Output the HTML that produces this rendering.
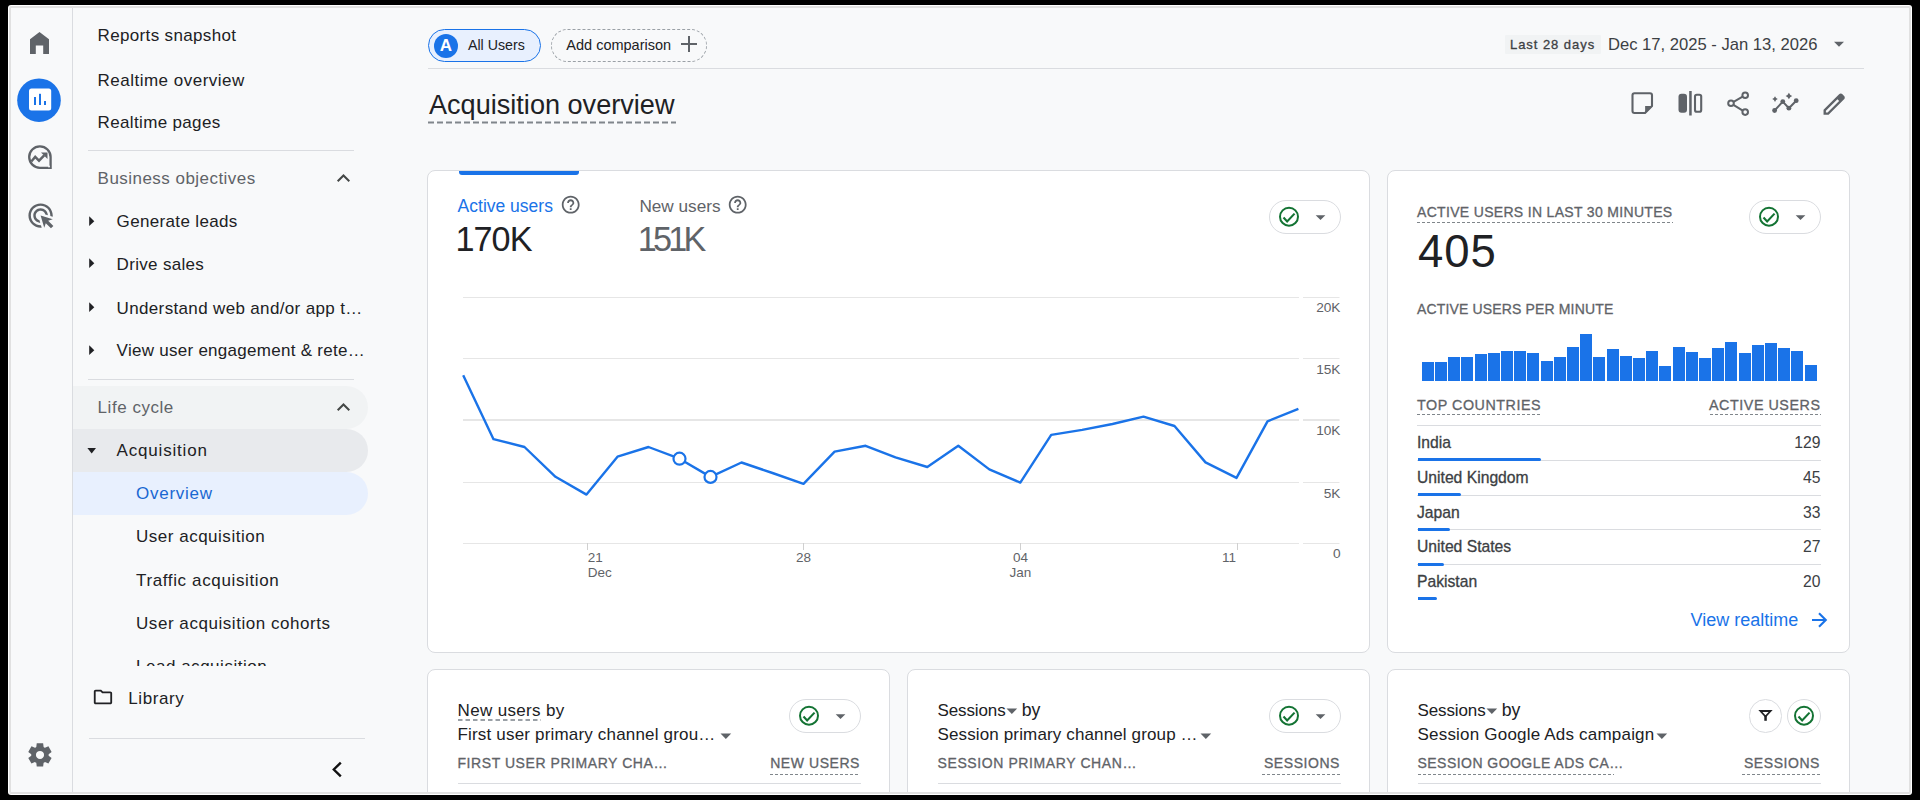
<!DOCTYPE html>
<html><head><meta charset="utf-8"><title>Acquisition overview</title>
<style>
html,body{margin:0;padding:0;width:1920px;height:800px;overflow:hidden;background:#000}
body{position:relative;font-family:"Liberation Sans",sans-serif}
.r{position:absolute;display:block}
.t{position:absolute;white-space:nowrap;line-height:1}
</style></head><body>
<div class="r" style="left:8px;top:5px;width:1904px;height:790px;background:#fff;border-radius:3px"></div>
<div class="r" style="left:9px;top:6px;width:1902px;height:788px;box-sizing:border-box;border:2px solid #e1e1e1;background:#f8f9fa;border-radius:2px"></div>
<div id="clip" style="position:absolute;left:0;top:0;width:1920px;height:800px;clip-path:inset(8px 11px 8px 11px)">
<div class="r" style="left:72px;top:8px;width:1px;height:784px;background:#dadce0;"></div>
<svg class="r" style="left:0px;top:0px;" width="80" height="60" viewBox="0 0 80 60"><path d="M30 54 V39.2 L39.5 32 L49 39.2 V54 H43.2 V45.6 H35.8 V54 Z" fill="#5f6368"/></svg>
<svg class="r" style="left:0px;top:70px;" width="80" height="60" viewBox="0 0 80 60"><circle cx="39" cy="30.2" r="21.8" fill="#1a73e8"/><rect x="29" y="18.6" width="22.2" height="22" rx="2.5" fill="#fff"/><rect x="34" y="27" width="2" height="8" fill="#1a73e8"/><rect x="39" y="23.8" width="2" height="11.2" fill="#1a73e8"/><rect x="44" y="31" width="2" height="4" fill="#1a73e8"/></svg>
<svg class="r" style="left:0px;top:130px;" width="80" height="50" viewBox="0 0 80 50"><path d="M50.6 27.1 V37.8 H39.9 A10.7 10.7 0 1 1 50.6 27.1 Z" fill="none" stroke="#5f6368" stroke-width="2.3"/><polyline points="31.3,31.6 35.2,26.9 39,30.7 44.2,25.3" fill="none" stroke="#5f6368" stroke-width="2.4"/><path d="M41 22.6 H47.5 V29 Z" fill="#5f6368"/><circle cx="49" cy="36.6" r="1" fill="#f8f9fa"/></svg>
<svg class="r" style="left:25.6px;top:201px;" width="29.2" height="29.2" viewBox="0 0 24 24"><path fill="#5f6368" d="M11.71,17.99C8.53,17.84,6,15.22,6,12c0-3.31,2.69-6,6-6c3.22,0,5.84,2.53,5.99,5.71l-2.1-0.63C15.48,9.31,13.89,8,12,8 c-2.21,0-4,1.79-4,4c0,1.89,1.31,3.47,3.08,3.89L11.71,17.99z M22,12c0,0.3-0.01,0.6-0.04,0.9l-1.97-0.59C20,12.21,20,12.1,20,12 c0-4.42-3.58-8-8-8s-8,3.58-8,8s3.58,8,8,8c0.1,0,0.21,0,0.31-0.01l0.59,1.97C12.6,21.99,12.3,22,12,22C6.48,22,2,17.52,2,12 C2,6.48,6.48,2,12,2S22,6.48,22,12z M18.23,16.26L22,15l-10-3l3,10l1.26-3.77l4.27,4.27l1.98-1.98L18.23,16.26z"/></svg>
<svg class="r" style="left:25.8px;top:741.1px;" width="27.9" height="27.9" viewBox="0 -960 960 960"><path fill="#5f6368" d="m370-80-16-128q-13-5-24.5-12T307-235l-119 50L78-375l103-78q-1-7-1-13.5v-27q0-6.5 1-13.5L78-585l110-190 119 50q11-8 23-15t24-12l16-128h220l16 128q13 5 24.5 12t22.5 15l119-50 110 190-103 78q1 7 1 13.5v27q0 6.5-2 13.5l103 78-110 190-118-50q-11 8-23 15t-24 12L590-80H370Zm112-260q58 0 99-41t41-99q0-58-41-99t-99-41q-59 0-99.5 41T342-480q0 58 40.5 99t99.5 41Z"/></svg>
<div class="t" style="top:27.00px;font-size:17.0px;color:#202124;letter-spacing:0.343px;left:97.6px;">Reports snapshot</div>
<div class="t" style="top:72.00px;font-size:17.0px;color:#202124;letter-spacing:0.486px;left:97.6px;">Realtime overview</div>
<div class="t" style="top:114.00px;font-size:17.0px;color:#202124;letter-spacing:0.347px;left:97.6px;">Realtime pages</div>
<div class="r" style="left:88px;top:150px;width:266px;height:1px;background:#dadce0;"></div>
<div class="t" style="top:170.00px;font-size:17.0px;color:#5f6368;letter-spacing:0.463px;left:97.6px;">Business objectives</div>
<svg class="r" style="left:330px;top:168px;" width="28" height="20" viewBox="0 0 28 20"><polyline points="7.7,13.3 13.5,7.5 19.3,13.3" fill="none" stroke="#444746" stroke-width="2"/></svg>
<svg class="r" style="left:84px;top:213.60000000000002px;" width="16" height="16" viewBox="0 0 16 16"><path d="M5.2 2.3 L10.3 7.2 L5.2 12.1 Z" fill="#202124"/></svg>
<div class="t" style="top:213.00px;font-size:17.0px;color:#202124;letter-spacing:0.342px;left:116.6px;">Generate leads</div>
<svg class="r" style="left:84px;top:256.40000000000003px;" width="16" height="16" viewBox="0 0 16 16"><path d="M5.2 2.3 L10.3 7.2 L5.2 12.1 Z" fill="#202124"/></svg>
<div class="t" style="top:256.00px;font-size:17.0px;color:#202124;letter-spacing:0.315px;left:116.6px;">Drive sales</div>
<svg class="r" style="left:84px;top:300.3px;" width="16" height="16" viewBox="0 0 16 16"><path d="M5.2 2.3 L10.3 7.2 L5.2 12.1 Z" fill="#202124"/></svg>
<div class="t" style="top:300.00px;font-size:17.0px;color:#202124;letter-spacing:0.347px;left:116.6px;">Understand web and/or app t…</div>
<svg class="r" style="left:84px;top:342.8px;" width="16" height="16" viewBox="0 0 16 16"><path d="M5.2 2.3 L10.3 7.2 L5.2 12.1 Z" fill="#202124"/></svg>
<div class="t" style="top:342.00px;font-size:17.0px;color:#202124;letter-spacing:0.274px;left:116.6px;">View user engagement &amp; rete…</div>
<div class="r" style="left:88px;top:379px;width:266px;height:1px;background:#dadce0;"></div>
<div class="r" style="left:73px;top:386px;width:295px;height:43px;background:#f1f3f4;border-radius:0 21.5px 21.5px 0"></div>
<div class="t" style="top:399.00px;font-size:17.0px;color:#5f6368;letter-spacing:0.541px;left:97.6px;">Life cycle</div>
<svg class="r" style="left:330px;top:397px;" width="28" height="20" viewBox="0 0 28 20"><polyline points="7.7,13.3 13.5,7.5 19.3,13.3" fill="none" stroke="#444746" stroke-width="2"/></svg>
<div class="r" style="left:73px;top:429px;width:295px;height:43px;background:#e8eaed;border-radius:0 21.5px 21.5px 0"></div>
<svg class="r" style="left:84px;top:443px;" width="16" height="16" viewBox="0 0 16 16"><path d="M3.4 5 L12 5 L7.7 10.6 Z" fill="#202124"/></svg>
<div class="t" style="top:442.00px;font-size:17.0px;color:#202124;letter-spacing:0.807px;left:116.6px;">Acquisition</div>
<div class="r" style="left:73px;top:472px;width:295px;height:43px;background:#e8f0fe;border-radius:0 21.5px 21.5px 0"></div>
<div class="t" style="top:485.00px;font-size:17.0px;color:#1967d2;letter-spacing:0.734px;left:136px;">Overview</div>
<div class="t" style="top:528.00px;font-size:17.0px;color:#202124;letter-spacing:0.511px;left:136px;">User acquisition</div>
<div class="t" style="top:572.00px;font-size:17.0px;color:#202124;letter-spacing:0.635px;left:136px;">Traffic acquisition</div>
<div class="t" style="top:615.00px;font-size:17.0px;color:#202124;letter-spacing:0.551px;left:136px;">User acquisition cohorts</div>
<div class="r" style="left:73px;top:640px;width:295px;height:26px;overflow:hidden">
<div class="t" style="left:63px;top:18px;font-size:17px;letter-spacing:0.52px;color:#202124">Lead acquisition</div>
</div>
<svg class="r" style="left:92.47px;top:686.34px;" width="21.96" height="21.96" viewBox="0 -960 960 960"><path fill="#202124" d="M160-160q-33 0-56.5-23.5T80-240v-480q0-33 23.5-56.5T160-800h240l80 80h320q33 0 56.5 23.5T880-640v400q0 33-23.5 56.5T800-160H160Zm0-80h640v-400H447l-80-80H160v480Zm0 0v-480 480Z"/></svg>
<div class="t" style="top:690.00px;font-size:17px;color:#202124;letter-spacing:0.62px;left:128.2px;">Library</div>
<div class="r" style="left:89px;top:738px;width:276px;height:1px;background:#dadce0;"></div>
<svg class="r" style="left:326px;top:760px;" width="22" height="20" viewBox="0 0 22 20"><polyline points="14.8,2.6 7.8,9.5 14.8,16.4" fill="none" stroke="#111" stroke-width="2.4"/></svg>
<div class="r" style="left:428px;top:29px;width:113px;height:33px;box-sizing:border-box;border:1px solid #1a73e8;background:#e8f0fe;border-radius:17px"></div>
<svg class="r" style="left:434px;top:34px;" width="24" height="24" viewBox="0 0 24 24"><circle cx="12" cy="12" r="12" fill="#1a73e8"/></svg>
<div class="t" style="top:37.00px;font-size:17px;color:#fff;font-weight:700;left:446px;transform:translateX(-50%);">A</div>
<div class="t" style="top:38.00px;font-size:14.2px;color:#202124;left:468px;">All Users</div>
<div class="r" style="left:551px;top:29px;width:156px;height:33px;box-sizing:border-box;border:1px dashed #9aa0a6;border-radius:17px"></div>
<div class="t" style="top:38.00px;font-size:14.5px;color:#202124;left:566.3px;">Add comparison</div>
<svg class="r" style="left:678px;top:33px;" width="22" height="22" viewBox="0 0 22 22"><path d="M3 11 H19 M11 3 V19" stroke="#5f6368" stroke-width="2"/></svg>
<div class="r" style="left:428px;top:68px;width:1436px;height:1px;background:#dadce0;"></div>
<div class="t" style="top:91.00px;font-size:27.1px;color:#202124;left:429px;">Acquisition overview</div>
<svg class="r" style="left:428px;top:121px;" width="248" height="3" viewBox="0 0 248 3"><line x1="0" y1="1.5" x2="248" y2="1.5" stroke="#80868b" stroke-width="2.2" stroke-dasharray="6 3"/></svg>
<div class="r" style="left:1505px;top:35px;width:96px;height:19px;background:#f1f3f4;border-radius:1px"></div>
<div class="t" style="top:38.00px;font-size:13px;color:#3c4043;letter-spacing:0.95px;left:1510px;-webkit-text-stroke:0.3px currentColor;">Last 28 days</div>
<div class="t" style="top:37.00px;font-size:16.6px;color:#3c4043;left:1608px;">Dec 17, 2025 - Jan 13, 2026</div>
<svg class="r" style="left:1830px;top:38px;" width="18" height="12" viewBox="0 0 18 12"><path d="M4 3.8 H14 L9 8.7 Z" fill="#5f6368"/></svg>
<svg class="r" style="left:1620px;top:80px;" width="240" height="46" viewBox="0 0 240 46"><path d="M12.5 15.2 Q12.5 13.2 14.5 13.2 H30 Q32 13.2 32 15.2 V26 L25 33 H14.5 Q12.5 33 12.5 31 Z" fill="none" stroke="#5f6368" stroke-width="2.1" stroke-linejoin="round"/><path d="M25.1 26 H32.4 L25.1 33.5 Z" fill="#5f6368"/><rect x="58.5" y="13.8" width="8.5" height="19" rx="3" fill="#5f6368"/><rect x="69.2" y="11" width="2.5" height="24.5" fill="#5f6368"/><rect x="75" y="14.8" width="6.2" height="17" rx="1.8" fill="none" stroke="#5f6368" stroke-width="2.1"/><path d="M111 23.3 L125.2 15.2 M111 23.3 L125.2 32.1" stroke="#5f6368" stroke-width="2"/><circle cx="125.2" cy="15.2" r="2.8" fill="#f8f9fa" stroke="#5f6368" stroke-width="2"/><circle cx="111" cy="23.3" r="2.8" fill="#f8f9fa" stroke="#5f6368" stroke-width="2"/><circle cx="125.2" cy="32.1" r="2.8" fill="#f8f9fa" stroke="#5f6368" stroke-width="2"/><polyline points="154.6,30.5 162.8,21.6 168.9,28.2 176.2,20.7" fill="none" stroke="#5f6368" stroke-width="2"/><circle cx="154.6" cy="30.5" r="2.4" fill="#5f6368"/><circle cx="162.8" cy="21.6" r="2.4" fill="#5f6368"/><circle cx="168.9" cy="28.2" r="2.4" fill="#5f6368"/><circle cx="176.2" cy="20.7" r="2.4" fill="#5f6368"/><path d="M168.9 12.7 Q169.8 15.1 172.20000000000002 16 Q169.8 16.9 168.9 19.3 Q168.0 16.9 165.6 16 Q168.0 15.1 168.9 12.7 Z" fill="#5f6368"/><path d="M155 16.3 Q155.75 18.35 157.8 19.1 Q155.75 19.85 155 21.900000000000002 Q154.25 19.85 152.2 19.1 Q154.25 18.35 155 16.3 Z" fill="#5f6368"/></svg>
<svg class="r" style="left:1819.5px;top:89.7px;" width="28.3" height="28.3" viewBox="0 -960 960 960"><path fill="#5f6368" d="M200-200h57l391-391-57-57-391 391v57Zm-80 80v-170l528-527q12-11 26.5-17t30.5-6q16 0 31 6t26 18l55 56q12 11 17.5 26t5.5 30q0 16-5.5 30.5T817-647L290-120H120Zm640-584-56-56 56 56Zm-141 85-28-29 57 57-29-28Z"/></svg>
<div class="r" style="left:427px;top:170px;width:943px;height:483px;box-sizing:border-box;border:1px solid #dadce0;background:#fff;border-radius:8px"></div>
<div class="r" style="left:459px;top:171px;width:120px;height:4.2px;background:#1a73e8;border-radius:0 0 3px 3px"></div>
<div class="t" style="top:198.00px;font-size:17.5px;color:#1a73e8;left:457.6px;">Active users</div>
<svg class="r" style="left:559.5px;top:194.1px;" width="21.4" height="21.4" viewBox="0 0 24 24"><path fill="#5f6368" d="M11 18h2v-2h-2v2zm1-16C6.48 2 2 6.48 2 12s4.48 10 10 10 10-4.48 10-10S17.52 2 12 2zm0 18c-4.41 0-8-3.590-8-8s3.59-8 8-8 8 3.59 8 8-3.59 8-8 8zm0-14c-2.21 0-4 1.79-4 4h2c0-1.1.9-2 2-2s2 .9 2 2c0 2-3 1.75-3 5h2c0-2.25 3-2.5 3-5 0-2.21-1.79-4-4-4z"/></svg>
<div class="t" style="top:222.00px;font-size:34.2px;color:#202124;letter-spacing:-1.0px;left:455.6px;">170K</div>
<div class="t" style="top:198.00px;font-size:17.2px;color:#5f6368;left:639.4px;">New users</div>
<svg class="r" style="left:726.5px;top:194.1px;" width="21.4" height="21.4" viewBox="0 0 24 24"><path fill="#5f6368" d="M11 18h2v-2h-2v2zm1-16C6.48 2 2 6.48 2 12s4.48 10 10 10 10-4.48 10-10S17.52 2 12 2zm0 18c-4.41 0-8-3.590-8-8s3.59-8 8-8 8 3.59 8 8-3.59 8-8 8zm0-14c-2.21 0-4 1.79-4 4h2c0-1.1.9-2 2-2s2 .9 2 2c0 2-3 1.75-3 5h2c0-2.25 3-2.5 3-5 0-2.21-1.79-4-4-4z"/></svg>
<div class="t" style="top:222.00px;font-size:34.2px;color:#5f6368;letter-spacing:-3.8px;left:637.8px;">151K</div>
<div class="r" style="left:1269px;top:200px;width:72px;height:34px;box-sizing:border-box;border:1px solid #dadce0;border-radius:17px;background:#fff"></div>
<svg class="r" style="left:1269px;top:200px;" width="72" height="34" viewBox="0 0 72 34"><circle cx="20" cy="16.7" r="9" fill="none" stroke="#137333" stroke-width="2"/><polyline points="14.5,17.5 18.15,21.5 25.55,13.6" fill="none" stroke="#137333" stroke-width="2.1"/><path d="M46.7 15.2 H56.4 L51.5 19.9 Z" fill="#5f6368"/></svg>
<svg class="r" style="left:0px;top:0px;pointer-events:none" width="1920" height="800" viewBox="0 0 1920 800"><line x1="463" y1="297.5" x2="1299" y2="297.5" stroke="#e6e6e6" stroke-width="1"/><line x1="1303" y1="297.5" x2="1339.5" y2="297.5" stroke="#e6e6e6" stroke-width="1"/><line x1="463" y1="358.5" x2="1299" y2="358.5" stroke="#e6e6e6" stroke-width="1"/><line x1="1303" y1="358.5" x2="1339.5" y2="358.5" stroke="#e6e6e6" stroke-width="1"/><line x1="463" y1="420" x2="1299" y2="420" stroke="#e6e6e6" stroke-width="2"/><line x1="1303" y1="420" x2="1339.5" y2="420" stroke="#e6e6e6" stroke-width="2"/><line x1="463" y1="482.5" x2="1299" y2="482.5" stroke="#e6e6e6" stroke-width="1"/><line x1="1303" y1="482.5" x2="1339.5" y2="482.5" stroke="#e6e6e6" stroke-width="1"/><line x1="463" y1="543.5" x2="1299" y2="543.5" stroke="#e6e6e6" stroke-width="1"/><line x1="1303" y1="543.5" x2="1339.5" y2="543.5" stroke="#e6e6e6" stroke-width="1"/><line x1="587.5" y1="543" x2="587.5" y2="550" stroke="#d0d0d0" stroke-width="1"/><line x1="803.5" y1="543" x2="803.5" y2="550" stroke="#d0d0d0" stroke-width="1"/><line x1="1020.5" y1="543" x2="1020.5" y2="550" stroke="#d0d0d0" stroke-width="1"/><line x1="1237.5" y1="543" x2="1237.5" y2="550" stroke="#d0d0d0" stroke-width="1"/><polyline points="463.2,375.3 493.5,439.2 524.5,447 555.5,476.8 586.5,494.6 617.5,456.7 648.5,447 679.5,458.7 710.5,476.9 741.5,462.5 772.5,473 803.5,483.8 834.6,451.6 865.6,445.8 895.5,457.4 927.3,467 958.3,445.8 989.3,469.4 1020.3,482.6 1051.2,434.9 1082.2,429.9 1112.5,424 1143.5,416.7 1174.5,426 1205.5,462.4 1236.5,477.9 1267.5,421.3 1298.4,408.8" fill="none" stroke="#1a73e8" stroke-width="2.4" stroke-linejoin="round"/><circle cx="679.5" cy="458.7" r="6" fill="#fff" stroke="#1a73e8" stroke-width="2.2"/><circle cx="710.5" cy="476.9" r="6" fill="#fff" stroke="#1a73e8" stroke-width="2.2"/></svg>
<div class="t" style="top:301.00px;font-size:13.7px;color:#5f6368;right:579.5px;">20K</div>
<div class="t" style="top:363.00px;font-size:13.7px;color:#5f6368;right:579.5px;">15K</div>
<div class="t" style="top:424.00px;font-size:13.7px;color:#5f6368;right:579.5px;">10K</div>
<div class="t" style="top:487.00px;font-size:13.7px;color:#5f6368;right:579.5px;">5K</div>
<div class="t" style="top:547.00px;font-size:13.7px;color:#5f6368;right:579.5px;">0</div>
<div class="t" style="top:551.00px;font-size:13.5px;color:#5f6368;left:587.8px;">21</div>
<div class="t" style="top:566.00px;font-size:13.5px;color:#5f6368;left:587.8px;">Dec</div>
<div class="t" style="top:551.00px;font-size:13.5px;color:#5f6368;left:803.5px;transform:translateX(-50%);">28</div>
<div class="t" style="top:551.00px;font-size:13.5px;color:#5f6368;left:1020.5px;transform:translateX(-50%);">04</div>
<div class="t" style="top:566.00px;font-size:13.5px;color:#5f6368;left:1020.5px;transform:translateX(-50%);">Jan</div>
<div class="t" style="top:551.00px;font-size:13.5px;color:#5f6368;right:684px;">11</div>
<div class="r" style="left:1387px;top:170px;width:463px;height:483px;box-sizing:border-box;border:1px solid #dadce0;background:#fff;border-radius:8px"></div>
<div class="t" style="top:205.00px;font-size:14px;color:#5f6368;letter-spacing:0.32px;left:1417px;-webkit-text-stroke:0.3px currentColor;">ACTIVE USERS IN LAST 30 MINUTES</div>
<svg class="r" style="left:1417px;top:221px;" width="256" height="3" viewBox="0 0 256 3"><line x1="0" y1="1.5" x2="256" y2="1.5" stroke="#80868b" stroke-width="1" stroke-dasharray="3 2"/></svg>
<div class="r" style="left:1749px;top:200px;width:72px;height:34px;box-sizing:border-box;border:1px solid #dadce0;border-radius:17px;background:#fff"></div>
<svg class="r" style="left:1749px;top:200px;" width="72" height="34" viewBox="0 0 72 34"><circle cx="20" cy="16.7" r="9" fill="none" stroke="#137333" stroke-width="2"/><polyline points="14.5,17.5 18.15,21.5 25.55,13.6" fill="none" stroke="#137333" stroke-width="2.1"/><path d="M46.7 15.2 H56.4 L51.5 19.9 Z" fill="#5f6368"/></svg>
<div class="t" style="top:229.00px;font-size:45.5px;color:#202124;letter-spacing:0.9px;left:1418px;">405</div>
<div class="t" style="top:302.00px;font-size:14px;color:#5f6368;letter-spacing:0.15px;left:1417px;-webkit-text-stroke:0.3px currentColor;">ACTIVE USERS PER MINUTE</div>
<svg class="r" style="left:0px;top:0px;pointer-events:none" width="1920" height="800" viewBox="0 0 1920 800"><rect x="1422" y="362" width="12" height="19" fill="#1a73e8"/><rect x="1435" y="362" width="12" height="19" fill="#1a73e8"/><rect x="1448" y="357" width="12" height="24" fill="#1a73e8"/><rect x="1461" y="357" width="12" height="24" fill="#1a73e8"/><rect x="1475" y="354" width="12" height="27" fill="#1a73e8"/><rect x="1488" y="353" width="12" height="28" fill="#1a73e8"/><rect x="1501" y="351" width="12" height="30" fill="#1a73e8"/><rect x="1514" y="351" width="12" height="30" fill="#1a73e8"/><rect x="1527" y="353" width="12" height="28" fill="#1a73e8"/><rect x="1541" y="361" width="12" height="20" fill="#1a73e8"/><rect x="1554" y="357" width="12" height="24" fill="#1a73e8"/><rect x="1567" y="347" width="12" height="34" fill="#1a73e8"/><rect x="1580" y="334" width="12" height="47" fill="#1a73e8"/><rect x="1593" y="357" width="12" height="24" fill="#1a73e8"/><rect x="1607" y="349" width="12" height="32" fill="#1a73e8"/><rect x="1620" y="356" width="12" height="25" fill="#1a73e8"/><rect x="1633" y="358" width="12" height="23" fill="#1a73e8"/><rect x="1646" y="351" width="12" height="30" fill="#1a73e8"/><rect x="1659" y="366" width="12" height="15" fill="#1a73e8"/><rect x="1673" y="347" width="12" height="34" fill="#1a73e8"/><rect x="1686" y="352" width="12" height="29" fill="#1a73e8"/><rect x="1699" y="358" width="12" height="23" fill="#1a73e8"/><rect x="1712" y="348" width="12" height="33" fill="#1a73e8"/><rect x="1725" y="342" width="12" height="39" fill="#1a73e8"/><rect x="1739" y="353" width="12" height="28" fill="#1a73e8"/><rect x="1752" y="345" width="12" height="36" fill="#1a73e8"/><rect x="1765" y="343" width="12" height="38" fill="#1a73e8"/><rect x="1778" y="348" width="12" height="33" fill="#1a73e8"/><rect x="1791" y="351" width="12" height="30" fill="#1a73e8"/><rect x="1805" y="365" width="12" height="16" fill="#1a73e8"/></svg>
<div class="t" style="top:398.00px;font-size:14.3px;color:#5f6368;letter-spacing:0.55px;left:1417px;-webkit-text-stroke:0.3px currentColor;">TOP COUNTRIES</div>
<svg class="r" style="left:1417px;top:413px;" width="124" height="3" viewBox="0 0 124 3"><line x1="0" y1="1.5" x2="124" y2="1.5" stroke="#80868b" stroke-width="1" stroke-dasharray="3 2"/></svg>
<div class="t" style="top:398.00px;font-size:14.3px;color:#5f6368;letter-spacing:0.55px;right:99.5px;-webkit-text-stroke:0.3px currentColor;">ACTIVE USERS</div>
<svg class="r" style="left:1710px;top:413px;" width="111" height="3" viewBox="0 0 111 3"><line x1="0" y1="1.5" x2="111" y2="1.5" stroke="#80868b" stroke-width="1" stroke-dasharray="3 2"/></svg>
<div class="r" style="left:1417px;top:425px;width:404px;height:1px;background:#dadce0;"></div>
<div class="t" style="top:435.00px;font-size:15.7px;color:#3c4043;left:1417px;-webkit-text-stroke:0.3px currentColor;">India</div>
<div class="t" style="top:435.00px;font-size:15.7px;color:#3c4043;right:99.5px;">129</div>
<div class="r" style="left:1417px;top:460.0px;width:404px;height:1px;background:#dadce0;"></div>
<div class="r" style="left:1417.5px;top:458px;width:123.5px;height:3px;background:#1a73e8;border-radius:0 1.5px 1.5px 0"></div>
<div class="t" style="top:470.00px;font-size:15.7px;color:#3c4043;left:1417px;-webkit-text-stroke:0.3px currentColor;">United Kingdom</div>
<div class="t" style="top:470.00px;font-size:15.7px;color:#3c4043;right:99.5px;">45</div>
<div class="r" style="left:1417px;top:495.0px;width:404px;height:1px;background:#dadce0;"></div>
<div class="r" style="left:1417.5px;top:493px;width:43.5px;height:3px;background:#1a73e8;border-radius:0 1.5px 1.5px 0"></div>
<div class="t" style="top:505.00px;font-size:15.7px;color:#3c4043;left:1417px;-webkit-text-stroke:0.3px currentColor;">Japan</div>
<div class="t" style="top:505.00px;font-size:15.7px;color:#3c4043;right:99.5px;">33</div>
<div class="r" style="left:1417px;top:529.0px;width:404px;height:1px;background:#dadce0;"></div>
<div class="r" style="left:1417.5px;top:528px;width:32.5px;height:3px;background:#1a73e8;border-radius:0 1.5px 1.5px 0"></div>
<div class="t" style="top:539.00px;font-size:15.7px;color:#3c4043;left:1417px;-webkit-text-stroke:0.3px currentColor;">United States</div>
<div class="t" style="top:539.00px;font-size:15.7px;color:#3c4043;right:99.5px;">27</div>
<div class="r" style="left:1417px;top:564.0px;width:404px;height:1px;background:#dadce0;"></div>
<div class="r" style="left:1417.5px;top:562.5px;width:26.5px;height:3px;background:#1a73e8;border-radius:0 1.5px 1.5px 0"></div>
<div class="t" style="top:574.00px;font-size:15.7px;color:#3c4043;left:1417px;-webkit-text-stroke:0.3px currentColor;">Pakistan</div>
<div class="t" style="top:574.00px;font-size:15.7px;color:#3c4043;right:99.5px;">20</div>
<div class="r" style="left:1417.5px;top:597px;width:19.200000000000045px;height:3px;background:#1a73e8;border-radius:0 1.5px 1.5px 0"></div>
<div class="t" style="top:611.00px;font-size:18px;color:#1a73e8;left:1690.6px;">View realtime</div>
<svg class="r" style="left:1807px;top:608px;" width="24" height="24" viewBox="0 0 24 24"><path d="M5 12 H18.5 M12 5.2 L18.8 12 L12 18.8" fill="none" stroke="#1a73e8" stroke-width="2.1"/></svg>
<div class="r" style="left:427px;top:669px;width:463px;height:200px;box-sizing:border-box;border:1px solid #dadce0;background:#fff;border-radius:8px"></div>
<div class="t" style="top:702.00px;font-size:17px;color:#202124;letter-spacing:0.35px;left:457.5px;">New users by</div>
<svg class="r" style="left:457.5px;top:718px;" width="83" height="4" viewBox="0 0 83 4"><line x1="0" y1="2" x2="83" y2="2" stroke="#9aa0a6" stroke-width="2" stroke-dasharray="4.5 3"/></svg>
<div class="t" style="top:726.00px;font-size:17px;color:#202124;letter-spacing:0.18px;left:457.5px;">First user primary channel grou…</div>
<svg class="r" style="left:720px;top:731.5px;" width="12" height="8" viewBox="0 0 12 8"><path d="M0.5 1.5 H11.2 L5.85 7 Z" fill="#5f6368"/></svg>
<div class="r" style="left:789px;top:699px;width:72px;height:34px;box-sizing:border-box;border:1px solid #dadce0;border-radius:17px;background:#fff"></div>
<svg class="r" style="left:789px;top:699px;" width="72" height="34" viewBox="0 0 72 34"><circle cx="20" cy="16.7" r="9" fill="none" stroke="#137333" stroke-width="2"/><polyline points="14.5,17.5 18.15,21.5 25.55,13.6" fill="none" stroke="#137333" stroke-width="2.1"/><path d="M46.7 15.2 H56.4 L51.5 19.9 Z" fill="#5f6368"/></svg>
<div class="t" style="top:756.00px;font-size:14px;color:#5f6368;letter-spacing:0.56px;left:457.5px;-webkit-text-stroke:0.3px currentColor;">FIRST USER PRIMARY CHA…</div>
<div class="t" style="top:756.00px;font-size:14px;color:#5f6368;letter-spacing:0.56px;right:1060px;-webkit-text-stroke:0.3px currentColor;">NEW USERS</div>
<svg class="r" style="left:770px;top:773px;" width="90" height="3" viewBox="0 0 90 3"><line x1="0" y1="1.5" x2="90" y2="1.5" stroke="#80868b" stroke-width="1" stroke-dasharray="3 2"/></svg>
<div class="r" style="left:457.5px;top:782.5px;width:403px;height:1px;background:#dadce0;"></div>
<div class="r" style="left:907px;top:669px;width:463px;height:200px;box-sizing:border-box;border:1px solid #dadce0;background:#fff;border-radius:8px"></div>
<div class="t" style="top:702.00px;font-size:17px;color:#202124;letter-spacing:-0.12px;left:937.5px;">Sessions</div>
<svg class="r" style="left:1006.25px;top:707px;" width="12" height="8" viewBox="0 0 12 8"><path d="M0.5 1.5 H11.2 L5.85 7 Z" fill="#5f6368"/></svg>
<div class="t" style="top:702.00px;font-size:17.7px;color:#202124;left:1021.75px;">by</div>
<div class="t" style="top:726.00px;font-size:17px;color:#202124;letter-spacing:0.135px;left:937.5px;">Session primary channel group …</div>
<svg class="r" style="left:1200px;top:731.5px;" width="12" height="8" viewBox="0 0 12 8"><path d="M0.5 1.5 H11.2 L5.85 7 Z" fill="#5f6368"/></svg>
<div class="r" style="left:1269px;top:699px;width:72px;height:34px;box-sizing:border-box;border:1px solid #dadce0;border-radius:17px;background:#fff"></div>
<svg class="r" style="left:1269px;top:699px;" width="72" height="34" viewBox="0 0 72 34"><circle cx="20" cy="16.7" r="9" fill="none" stroke="#137333" stroke-width="2"/><polyline points="14.5,17.5 18.15,21.5 25.55,13.6" fill="none" stroke="#137333" stroke-width="2.1"/><path d="M46.7 15.2 H56.4 L51.5 19.9 Z" fill="#5f6368"/></svg>
<div class="t" style="top:756.00px;font-size:14px;color:#5f6368;letter-spacing:0.6px;left:937.5px;-webkit-text-stroke:0.3px currentColor;">SESSION PRIMARY CHAN…</div>
<div class="t" style="top:756.00px;font-size:14px;color:#5f6368;letter-spacing:0.56px;right:580px;-webkit-text-stroke:0.3px currentColor;">SESSIONS</div>
<svg class="r" style="left:1262px;top:773px;" width="78" height="3" viewBox="0 0 78 3"><line x1="0" y1="1.5" x2="78" y2="1.5" stroke="#80868b" stroke-width="1" stroke-dasharray="3 2"/></svg>
<div class="r" style="left:937.5px;top:782.5px;width:403px;height:1px;background:#dadce0;"></div>
<div class="r" style="left:1387px;top:669px;width:463px;height:200px;box-sizing:border-box;border:1px solid #dadce0;background:#fff;border-radius:8px"></div>
<div class="t" style="top:702.00px;font-size:17px;color:#202124;letter-spacing:-0.12px;left:1417.5px;">Sessions</div>
<svg class="r" style="left:1486.25px;top:707px;" width="12" height="8" viewBox="0 0 12 8"><path d="M0.5 1.5 H11.2 L5.85 7 Z" fill="#5f6368"/></svg>
<div class="t" style="top:702.00px;font-size:17.7px;color:#202124;left:1501.75px;">by</div>
<div class="t" style="top:726.00px;font-size:17px;color:#202124;letter-spacing:0.2px;left:1417.5px;">Session Google Ads campaign</div>
<svg class="r" style="left:1656.25px;top:731.5px;" width="12" height="8" viewBox="0 0 12 8"><path d="M0.5 1.5 H11.2 L5.85 7 Z" fill="#5f6368"/></svg>
<div class="r" style="left:1749px;top:699px;width:33px;height:34px;box-sizing:border-box;border:1px solid #dadce0;border-radius:17px;background:#fff"></div>
<div class="r" style="left:1787px;top:699px;width:34px;height:34px;box-sizing:border-box;border:1px solid #dadce0;border-radius:17px;background:#fff"></div>
<svg class="r" style="left:1749px;top:699px;" width="33" height="34" viewBox="0 0 33 34"><path d="M11.4 12 H21.6 L16.5 17.5 Z" fill="none" stroke="#202124" stroke-width="1.8" stroke-linejoin="miter"/><rect x="15.3" y="17" width="2.5" height="4.8" fill="#202124"/></svg>
<svg class="r" style="left:1787px;top:699px;" width="34" height="34" viewBox="0 0 34 34"><circle cx="17" cy="16.7" r="9" fill="none" stroke="#137333" stroke-width="2"/><polyline points="11.5,17.5 15.15,21.5 22.55,13.6" fill="none" stroke="#137333" stroke-width="2.1"/></svg>
<div class="t" style="top:756.00px;font-size:14px;color:#5f6368;letter-spacing:0.46px;left:1417.5px;-webkit-text-stroke:0.3px currentColor;">SESSION GOOGLE ADS CA…</div>
<svg class="r" style="left:1417.5px;top:773px;" width="196" height="3" viewBox="0 0 196 3"><line x1="0" y1="1.5" x2="196" y2="1.5" stroke="#80868b" stroke-width="1" stroke-dasharray="3 2"/></svg>
<div class="t" style="top:756.00px;font-size:14px;color:#5f6368;letter-spacing:0.56px;right:100px;-webkit-text-stroke:0.3px currentColor;">SESSIONS</div>
<svg class="r" style="left:1742px;top:773px;" width="78" height="3" viewBox="0 0 78 3"><line x1="0" y1="1.5" x2="78" y2="1.5" stroke="#80868b" stroke-width="1" stroke-dasharray="3 2"/></svg>
<div class="r" style="left:1417.5px;top:782.5px;width:403px;height:1px;background:#dadce0;"></div>
</div>
</body></html>
